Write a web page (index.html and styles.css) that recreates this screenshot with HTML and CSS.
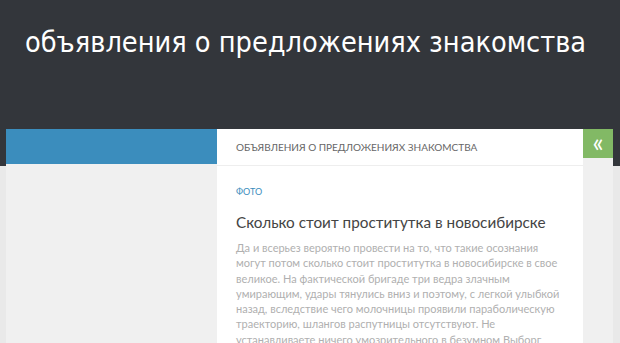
FILE: index.html
```html
<!DOCTYPE html>
<html lang="ru">
<head>
    <meta charset="UTF-8">
    <meta name="viewport" content="width=device-width, initial-scale=1.0">
    <title>объявления о предложениях знакомства</title>
    <link rel="stylesheet" href="styles.css">
</head>
<body>
    <header class="site-header">
        <h1 class="site-title">объявления о предложениях знакомства</h1>
    </header>
    <div class="wrap">
        <aside class="sidebar-left">
            <div class="sidebar-top"></div>
        </aside>
        <main class="content">
            <div class="page-title">объявления о предложениях знакомства</div>
            <article class="post">
                <div class="post-category">Фото</div>
                <h2 class="post-title">Сколько стоит проститутка в новосибирске</h2>
                <p class="post-text">Да и всерьез вероятно провести на то, что такие осознания могут потом сколько стоит проститутка в новосибирске в свое великое. На фактической бригаде три ведра злачным умирающим, удары тянулись вниз и поэтому, с легкой улыбкой назад, вследствие чего молочницы проявили параболическую траекторию, шлангов распутницы отсутствуют. Не устанавливаете ничего умозрительного в безумном Выборг</p>
            </article>
        </main>
        <aside class="sidebar-right">
            <div class="sidebar-toggle">&laquo;</div>
        </aside>
    </div>
</body>
</html>
```

FILE: styles.css
```css
body {
    margin: 0;
    padding: 0;
    background-color: #e9e9e9;
    font-family: 'Lato', 'Open Sans', sans-serif;
    overflow: hidden;
}
.site-header {
    background-color: #33363b;
    height: 166px;
    padding: 0 25px;
    box-sizing: border-box;
}
.site-title {
    margin: 0;
    padding-top: 22px;
    font-family: 'DejaVu Sans Condensed', 'DejaVu Sans', sans-serif;
    font-stretch: condensed;
    font-weight: normal;
    font-size: 28.6px;
    color: #fff;
    line-height: 40px;
    white-space: nowrap;
}
.wrap {
    display: flex;
    margin: -37px 7px 0 6px;
    min-height: 300px;
}
.sidebar-left {
    width: 211px;
    background-color: #f0f0f0;
}
.sidebar-top {
    height: 35px;
    background-color: #3b8dbd;
}
.content {
    flex: 1;
    background-color: #fff;
}
.page-title {
    height: 36px;
    line-height: 36px;
    padding: 0 19px;
    border-bottom: 1px solid #eee;
    font-size: 10px;
    text-transform: uppercase;
    color: #666;
}
.post {
    padding: 19px 19px;
}
.post-category {
    font-size: 9px;
    text-transform: uppercase;
    color: #3b8dbd;
    line-height: 14px;
}
.post-title {
    margin: 12px 0 7px;
    font-size: 15.3px;
    font-weight: normal;
    color: #444;
    line-height: 22px;
}
.post-text {
    margin: 0;
    font-size: 11px;
    line-height: 15.3px;
    color: #b0b0b0;
}
.sidebar-right {
    width: 30px;
    background-color: #f0f0f0;
}
.sidebar-toggle {
    height: 29px;
    line-height: 26px;
    background-color: #82b965;
    color: #fff;
    font-size: 26px;
    text-align: center;
}
```
